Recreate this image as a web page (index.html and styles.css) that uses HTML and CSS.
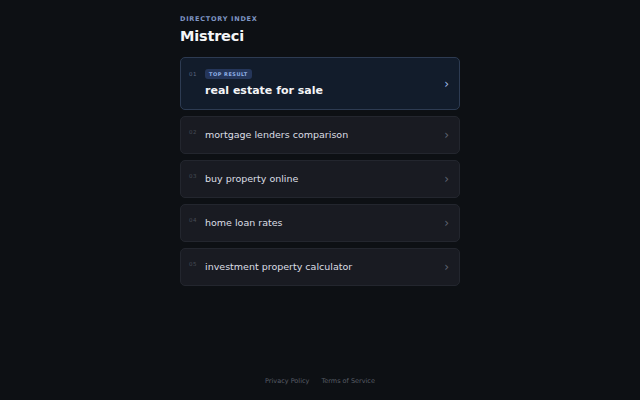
FILE: index.html
```html
<!DOCTYPE html>
<html>
  <head>
    <title>Mistreci</title>
    <link rel="stylesheet" href="styles.css">
  </head>
  <body>
    <div class="page">
      <header class="head">
        <div class="eyebrow">DIRECTORY INDEX</div>
        <h1 class="title">Mistreci</h1>
      </header>

      <ul class="list">
        <li class="item item-top">
          <span class="num">01</span>
          <div class="body">
            <span class="badge">TOP RESULT</span>
            <span class="label">real estate for sale</span>
          </div>
          <span class="chev">&#8250;</span>
        </li>
        <li class="item">
          <span class="num">02</span>
          <div class="body"><span class="label">mortgage lenders comparison</span></div>
          <span class="chev">&#8250;</span>
        </li>
        <li class="item">
          <span class="num">03</span>
          <div class="body"><span class="label">buy property online</span></div>
          <span class="chev">&#8250;</span>
        </li>
        <li class="item">
          <span class="num">04</span>
          <div class="body"><span class="label">home loan rates</span></div>
          <span class="chev">&#8250;</span>
        </li>
        <li class="item">
          <span class="num">05</span>
          <div class="body"><span class="label">investment property calculator</span></div>
          <span class="chev">&#8250;</span>
        </li>
      </ul>

      <footer class="foot">
        <a href="#">Privacy Policy</a>
        <a href="#">Terms of Service</a>
      </footer>
    </div>
  </body>
</html>
```

FILE: styles.css
```css
html, body {
  margin: 0;
  height: 100%;
  background-color: #0d1014;
  font-family: "DejaVu Sans", sans-serif;
  color: #d4d7de;
}

.page {
  width: 280px;
  margin: 0 auto;
  min-height: 100%;
  display: flex;
  flex-direction: column;
  box-sizing: border-box;
  padding-top: 15px;
}

.eyebrow {
  font-size: 6.5px;
  font-weight: bold;
  letter-spacing: 0.75px;
  color: #7f96c4;
  line-height: 8px;
}

.title {
  margin: 3px 0 0;
  font-size: 14.5px;
  line-height: 20px;
  font-weight: bold;
  letter-spacing: -0.2px;
  color: #f4f5f7;
}

.list {
  list-style: none;
  margin: 11px 0 0;
  padding: 0;
  display: flex;
  flex-direction: column;
  gap: 6px;
}

.item {
  display: flex;
  align-items: center;
  height: 38px;
  box-sizing: border-box;
  padding: 0 10px 0 8px;
  background-color: #191b22;
  border: 1px solid #23262e;
  border-radius: 5px;
}

.item-top {
  height: 53px;
  background-color: #121c2b;
  border-color: #2d3b52;
}

.num {
  align-self: flex-start;
  width: 16px;
  margin-top: 12px;
  font-size: 5.5px;
  color: #474c56;
  letter-spacing: 0.5px;
}

.item-top .num {
  margin-top: 13px;
  color: #5b6680;
}

.body {
  flex: 1;
  display: flex;
  flex-direction: column;
  align-items: flex-start;
}

.badge {
  font-size: 5px;
  font-weight: bold;
  letter-spacing: 0.5px;
  color: #8fb0e6;
  background-color: #25365a;
  border-radius: 3px;
  padding: 2.5px 4px;
  line-height: 5px;
  margin-bottom: 5px;
}

.label {
  font-size: 9.5px;
  line-height: 14px;
  color: #dcdfe5;
}

.item-top .label {
  font-size: 11px;
  font-weight: bold;
  color: #f4f5f7;
}

.chev {
  font-size: 12px;
  color: #5d6270;
}

.item-top .chev {
  color: #9fb8e6;
}

.foot {
  margin-top: auto;
  padding-bottom: 15px;
  display: flex;
  justify-content: center;
  gap: 12px;
}

.foot a {
  font-size: 6.5px;
  color: #585d66;
  text-decoration: none;
}
```
